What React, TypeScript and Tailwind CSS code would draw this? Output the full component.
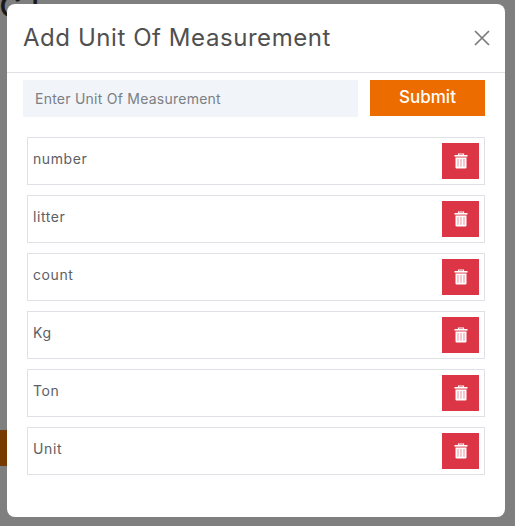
const units = ["number", "litter", "count", "Kg", "Ton", "Unit"];

function Trash() {
  return (
    <svg width="14" height="16" viewBox="0 0 14 16" aria-hidden="true">
      <path d="M4.5 2 V1 H9.5 V2" fill="none" stroke="#ffffff" strokeWidth="1.2" />
      <path d="M0.5 2 H13.5 V3.6 H0.5 Z" fill="#ffffff" />
      <path d="M1.5 4.4 H12.5 V14.5 Q12.5 15.6 11.4 15.6 H2.6 Q1.5 15.6 1.5 14.5 Z" fill="#ffffff" />
      <path d="M4 6 V13.8 M7 6 V13.8 M10 6 V13.8" stroke="#ee9aa2" strokeWidth="1.1" fill="none" />
    </svg>
  );
}

export default function App() {
  return (
    <div className="relative h-[526px] w-[515px] overflow-hidden bg-[#7f7f7f] pl-[7px] pt-[4px] font-['Inter','Liberation_Sans',sans-serif]">
      <div className="absolute left-[-1px] top-[-17px] text-[40px] leading-[40px] tracking-[8px] text-[#1a1a1a]">ct</div>
      <div className="absolute left-0 top-[430px] h-[36px] w-[7px] bg-[#773a00]" />
      <div className="relative h-[513px] w-[498px] rounded-[8px] bg-white">
        <div className="flex h-[69px] items-center justify-between border-b border-[#dee2e6] pl-[16px] pr-[15px]">
          <h2 className="text-[24px] font-normal leading-[32px] tracking-[0.56px] text-[#505050]">Add Unit Of Measurement</h2>
          <svg width="16" height="16" viewBox="0 0 16 16" className="text-[#7b7b7b]" aria-hidden="true">
            <path d="M1 1 L15 15 M15 1 L1 15" stroke="currentColor" strokeWidth="1.7" fill="none" />
          </svg>
        </div>
        <div className="flex gap-[12px] pl-[16px] pt-[7px]">
          <div className="flex h-[37px] w-[335px] items-center bg-[#f1f4f9] pl-[12px] text-[14px] tracking-[0.24px] text-[#7b7f84]">Enter Unit Of Measurement</div>
          <button className="h-[36px] w-[115px] bg-[#ec6c00] text-[17px] font-medium text-white">Submit</button>
        </div>
        <ul className="ml-[20px] mt-[20px] flex w-[458px] flex-col gap-[10px]">
          {units.map((u) => (
            <li key={u} className="flex h-[48px] justify-between border border-[#dee2e6] pl-[5px] pr-[5px] pt-[5px]">
              <span className="text-[14px] leading-[32px] tracking-[0.6px] text-[#5c6065]">{u}</span>
              <button className="flex h-[36px] w-[37px] items-center justify-center bg-[#dc3545]">
                <Trash />
              </button>
            </li>
          ))}
        </ul>
      </div>
    </div>
  );
}
